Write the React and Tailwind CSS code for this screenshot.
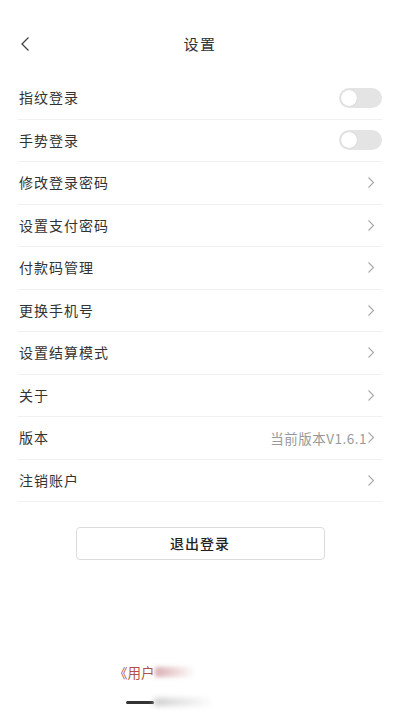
import { useState } from "react";

const rows = [
  { label: "指纹登录", type: "switch" },
  { label: "手势登录", type: "switch" },
  { label: "修改登录密码" },
  { label: "设置支付密码" },
  { label: "付款码管理" },
  { label: "更换手机号" },
  { label: "设置结算模式" },
  { label: "关于" },
  { label: "版本", value: "当前版本V1.6.1" },
  { label: "注销账户" },
];

function Chevron() {
  return (
    <svg width="8" height="13" viewBox="0 0 8 13" fill="none" className="shrink-0">
      <path d="M1.5 1.5 L6.5 6.5 L1.5 11.5" stroke="#a8a8a8" strokeWidth="1.1" />
    </svg>
  );
}

function Toggle({ on, onClick }) {
  return (
    <button
      type="button"
      onClick={onClick}
      className={`w-[43px] h-[20px] rounded-full p-[2px] flex items-center ${on ? "bg-[#e0483a] justify-end" : "bg-[#e4e4e4] justify-start"}`}
    >
      <span className="w-[16px] h-[16px] rounded-full bg-white shadow-[0_0_1px_rgba(0,0,0,0.2)]" />
    </button>
  );
}

export default function App() {
  const [switches, setSwitches] = useState({});

  return (
    <div
      className="w-[400px] h-[711px] bg-white flex flex-col overflow-hidden text-[#333]"
      style={{ fontFamily: '"Noto Sans CJK SC", "Noto Sans", sans-serif' }}
    >
      {/* HEADER */}
      <div className="mt-[24px] h-[40px] px-[18px] flex items-center relative">
        <svg width="12" height="16" viewBox="0 0 12 16" fill="none" className="ml-[1px]">
          <path d="M9.5 1.5 L3 8 L9.5 14.5" stroke="#444" strokeWidth="1.3" />
        </svg>
        <div className="absolute left-0 right-0 text-center text-[15px] tracking-[1.5px] pointer-events-none">设置</div>
      </div>

      {/* LIST */}
      <div className="mt-[13px] mx-[18px]">
        {rows.map((row) => (
          <div
            key={row.label}
            className="h-[42.5px] flex items-center justify-between border-b border-[#f0f0f0]"
          >
            <span className="text-[14px] tracking-[1px] text-[#333] pl-[1px]">{row.label}</span>
            {row.type === "switch" ? (
              <Toggle
                on={!!switches[row.label]}
                onClick={() => setSwitches((s) => ({ ...s, [row.label]: !s[row.label] }))}
              />
            ) : (
              <div className="flex items-center pr-[7px]">
                {row.value && <span className="text-[13.5px] tracking-[0.5px] text-[#999]">{row.value}</span>}
                <Chevron />
              </div>
            )}
          </div>
        ))}
      </div>

      {/* LOGOUT */}
      <div className="mt-[25px] flex justify-center">
        <button
          type="button"
          className="w-[249px] h-[33px] border border-[#dcdcdc] rounded-[4px] text-[14px] tracking-[1px] font-medium text-[#222]"
        >
          退出登录
        </button>
      </div>

      {/* BOTTOM */}
      <div className="mt-auto relative h-[60px]">
        <div className="absolute left-[114px] top-[11px] flex items-center">
          <span className="text-[13.5px] text-[#b0524a]">《用户</span>
          <span className="w-[40px] h-[10px] bg-gradient-to-r from-[#d9aeb0] to-transparent blur-[2px]" />
        </div>
        <div className="absolute left-[126px] bottom-[6px] flex items-center">
          <span className="w-[28px] h-[3px] rounded-full bg-[#333]" />
          <span className="w-[60px] h-[6px] bg-gradient-to-r from-[#bbb] to-transparent blur-[3px]" />
        </div>
      </div>
    </div>
  );
}
